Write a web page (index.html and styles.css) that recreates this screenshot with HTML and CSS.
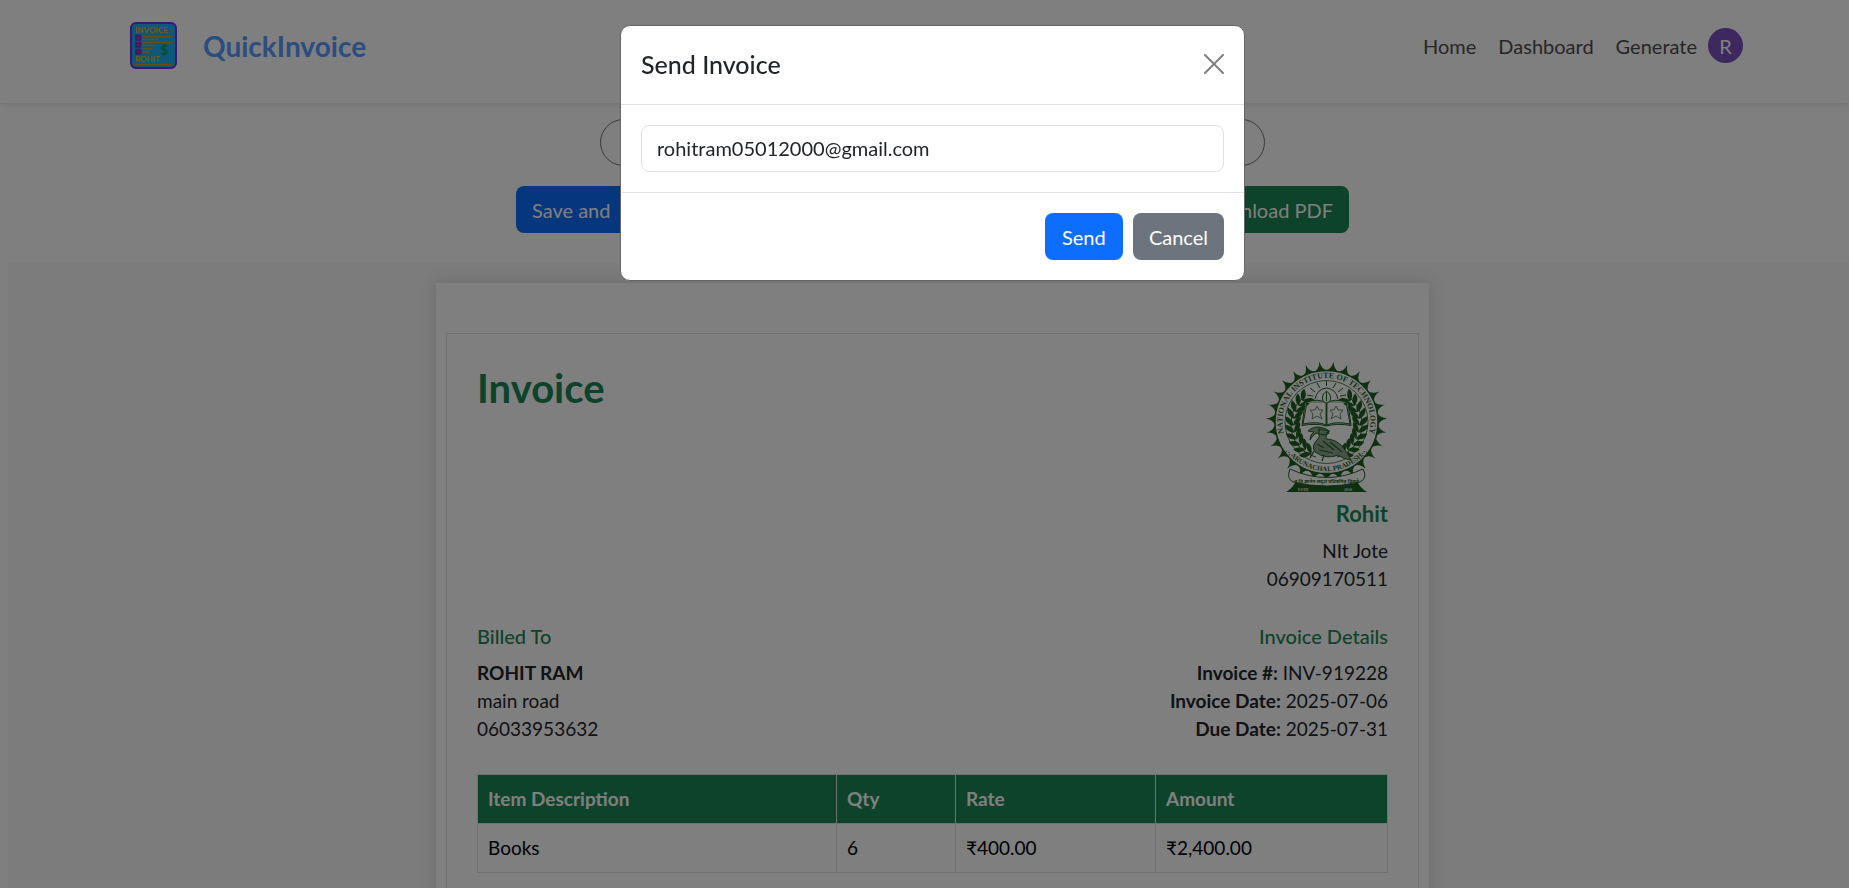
FILE: index.html
```html
<!DOCTYPE html>
<html lang="en">
<head>
<meta charset="utf-8">
<title>QuickInvoice</title>
<link rel="stylesheet" href="styles.css">
</head>
<body>
<div class="page">
  <header class="navbar">
    <a class="brand" href="#">
      <svg class="brand-logo" viewBox="0 0 47 47" aria-hidden="true">
        <rect x="1" y="1" width="45" height="45" rx="5" fill="#1ab0f0" stroke="#7a2bea" stroke-width="2"/>
        <text x="5" y="11" class="logo-text">INVOICE</text>
        <g fill="#e0305a" stroke="#7a2bea" stroke-width="1.500"><rect x="6" y="13.500" width="4.500" height="4.500"/><rect x="6" y="20.500" width="4.500" height="4.500"/><rect x="6" y="27.500" width="4.500" height="4.500"/></g>
        <path d="M13 14.500H41M13 17.500H28M13 20.500H41M13 23.500H26M13 27H22M13 30H19M5 42.500H41" stroke="#d49a20" stroke-width="1.300" stroke-linecap="round"/>
        <text x="30.500" y="33" class="logo-dollar">$</text>
        <text x="5" y="40" class="logo-text">ROHIT</text>
      </svg>
      <span class="brand-name">QuickInvoice</span>
    </a>
    <nav class="nav">
      <a href="#">Home</a>
      <a href="#">Dashboard</a>
      <a href="#">Generate</a>
      <button class="avatar" type="button" aria-label="Open user menu">R</button>
    </nav>
  </header>
  <main>
    <div class="templates">
      <button type="button">Template1</button>
      <button type="button">Template2</button>
      <button type="button">Template3</button>
      <button type="button">Template4</button>
      <button type="button">Template5</button>
    </div>
    <div class="actions">
      <button class="btn primary split" type="button"><span>Save and</span><span>Exit</span></button>
      <button class="btn danger" type="button">Delete Invoice</button>
      <button class="btn info" type="button">Send Email</button>
      <button class="btn success" type="button">Download PDF</button>
    </div>
    <section class="preview">
      <div class="paper">
        <article class="invoice">
          <div class="row top">
            <h1>Invoice</h1>
            <div class="company">
              <svg class="seal" viewBox="0 0 122 128" role="img" aria-label="National Institute of Technology Arunachal Pradesh">
                <defs>
                  <path id="tooth" d="M53.500 7Q59.500 5 60.500-3Q61.500 5 67.500 7L67.500 9H53.500Z"/>
                  <g id="teeth3"><use href="#tooth" transform="rotate(6.667 60.500 58)"/><use href="#tooth" transform="rotate(20 60.500 58)"/><use href="#tooth" transform="rotate(33.333 60.500 58)"/></g>
                  <g id="teeth9"><use href="#teeth3"/><use href="#teeth3" transform="rotate(40 60.500 58)"/><use href="#teeth3" transform="rotate(80 60.500 58)"/></g>
                  <g id="leaves"><path d="M27 60C21 58 19 54 20 50C25 52 28 55 27 60ZM27 60C28 55 31 51 35 51C36 55 32 59 27 60Z"/></g>
                  <g id="laurel">
                    <path d="M50 93A34 34 0 0 1 37 34" fill="none" stroke="#1f5f22"/>
                    <use href="#leaves" transform="rotate(-63 60.500 60)"/><use href="#leaves" transform="rotate(-51 60.500 60)"/><use href="#leaves" transform="rotate(-39 60.500 60)"/><use href="#leaves" transform="rotate(-27 60.500 60)"/><use href="#leaves" transform="rotate(-15 60.500 60)"/><use href="#leaves" transform="rotate(-3 60.500 60)"/><use href="#leaves" transform="rotate(9 60.500 60)"/><use href="#leaves" transform="rotate(21 60.500 60)"/><use href="#leaves" transform="rotate(33 60.500 60)"/><use href="#leaves" transform="rotate(44 60.500 60)"/>
                  </g>
                  <path id="arc-top" d="M22.400 80A44 44 0 1 1 98.600 80"/>
                  <path id="arc-bottom" d="M22 89A50 50 0 0 0 99 89"/>
                </defs>
                <g fill="#1f5f22">
                  <use href="#teeth9"/><use href="#teeth9" transform="rotate(120 60.500 58)"/><use href="#teeth9" transform="rotate(240 60.500 58)"/>
                  <circle cx="60.500" cy="58" r="51.500" fill="#fff" stroke="#1f5f22" stroke-width="1.500"/>
                  <circle cx="60.500" cy="58" r="41.500" fill="none" stroke="#1f5f22" stroke-width=".8"/>
                  <text class="seal-name"><textPath href="#arc-top" startOffset="50%">NATIONAL INSTITUTE OF TECHNOLOGY</textPath></text>
                  <text class="seal-state"><textPath href="#arc-bottom" startOffset="50%">ARUNACHAL PRADESH</textPath></text>
                  <use href="#laurel"/><use href="#laurel" transform="translate(121 0) scale(-1 1)"/>
                  <g fill="none" stroke="#1f5f22" stroke-width="1">
                    <circle cx="21" cy="90" r="2.500" stroke-dasharray="1.500 1"/><circle cx="99" cy="90" r="2.500" stroke-dasharray="1.500 1"/>
                    <path d="M49 35Q51 25 60.500 24Q70 25 72 35M60.500 28V37M57 37Q55 31 60.500 27Q66 31 64 37M60.500 22V17M54 24 51 19M67 24 70 19M49 28 44 24M72 28 77 24M47 32 41 31M74 32 80 31"/>
                    <path d="M41 38Q52 34 60.500 39Q69 34 80 38L84 60Q70 57 60.500 61Q51 57 37 60ZM39 39 36 61.500Q50 59 60.500 62Q71 59 85 61.500L82 39" fill="#c9d3c9"/>
                    <path d="M60.500 39V61" stroke-width="1.800"/>
                    <path d="M51 42 53 46 57 46 54 50 56 55 51 52 46 55 47 50 44 46 49 46ZM70 42 68 46 64 46 67 50 65 55 70 52 75 55 74 50 77 46 72 46Z" stroke-width=".7" fill="#fff"/>
                  </g>
                  <path d="M42 67Q48 61 57 64Q63 65 63 69Q59 71 60 75Q69 75 76 82Q81 88 85 96Q77 95 72 91Q61 96 49 88Q45 82 51 76Q55 72 52 69Q48 69 44 76Q44 70 48 68Z" fill="#8fa58f" stroke="#1f5f22"/>
                  <path d="M53 65 63 67 59 71 53 70ZM48 87 44 94M58 91 56 97M51 80 58 84M57 77 68 86M64 78 76 88M53 86 67 89" stroke="#1f5f22" stroke-width="1.200" fill="none"/>
                  <path d="M30 117H91Q94 124 101 128H20Q27 124 30 117Z"/>
                  <path d="M24 105Q60.500 122 97 105Q102 114 94 118Q60.500 126 27 118Q20 114 24 105Z" fill="#fff" stroke="#1f5f22"/>
                  <text x="60.500" y="119" class="seal-motto">न हि ज्ञानेन सदृशं पवित्रमिह विद्यते</text>
                  <text x="32" y="127" class="seal-year">ESTD</text><text x="78" y="127" class="seal-year">2010</text>
                </g>
              </svg>
              <h2>Rohit</h2>
              <p>NIt Jote</p>
              <p>06909170511</p>
            </div>
          </div>
          <div class="row parties">
            <div>
              <h3>Billed To</h3>
              <p><strong>ROHIT RAM</strong></p>
              <p>main road</p>
              <p>06033953632</p>
            </div>
            <div class="details">
              <h3>Invoice Details</h3>
              <p><strong>Invoice #:</strong> INV-919228</p>
              <p><strong>Invoice Date:</strong> 2025-07-06</p>
              <p><strong>Due Date:</strong> 2025-07-31</p>
            </div>
          </div>
          <table class="items">
            <thead><tr><th class="c-item">Item Description</th><th class="c-qty">Qty</th><th class="c-rate">Rate</th><th>Amount</th></tr></thead>
            <tbody><tr><td>Books</td><td>6</td><td>₹400.00</td><td>₹2,400.00</td></tr></tbody>
          </table>
        </article>
      </div>
    </section>
  </main>
</div>
<div class="backdrop">
  <div class="modal" role="dialog" aria-modal="true" aria-labelledby="modal-title">
    <div class="modal-header">
      <h2 id="modal-title">Send Invoice</h2>
      <button class="close" type="button" aria-label="Close">
        <svg viewBox="0 0 20 20" aria-hidden="true"><path d="M1 1 19 19M19 1 1 19"/></svg>
      </button>
    </div>
    <div class="modal-body"><input type="email" aria-label="Customer email" value="rohitram05012000@gmail.com"></div>
    <div class="modal-footer">
      <button class="btn primary" type="button">Send</button>
      <button class="btn secondary" type="button">Cancel</button>
    </div>
  </div>
</div>
</body>
</html>
```
FILE: styles.css
```css
* { box-sizing: border-box; }
html, body { height: 100%; }
body { margin: 0; overflow: hidden; font: 20px/28px Lato, "Open Sans", sans-serif; color: #212529; background: #fff; }
h1, h2, h3, p { margin: 0; }
button, input { font: inherit; }
a { color: inherit; text-decoration: none; }
.page { height: 100%; overflow: hidden; }
.navbar { display: flex; justify-content: space-between; align-items: center; padding: 22px 106px 34px 130px; box-shadow: 0 2px 5px rgba(0, 0, 0, .1); }
.brand { display: flex; align-items: center; gap: 26px; }
.brand-logo { width: 47px; height: 47px; }
.logo-text { font: 700 8px Lato, sans-serif; fill: #e8b020; }
.logo-dollar { font: 700 13px Lato, sans-serif; fill: #0c9a50; }
.brand-name { font-size: 28px; font-weight: 700; color: #569aff; }
.nav { display: flex; align-items: center; gap: 22px; color: #4d4d4d; }
.avatar { width: 35px; height: 35px; margin-left: -11px; padding: 0; border: 0; border-radius: 50%; background: #7b52bf; color: #fff; }
main { padding-left: 16px; }
.templates, .actions { display: flex; justify-content: space-between; margin: 16px auto 0; }
.templates { max-width: 665px; }
.templates button { height: 47px; padding: 0 18px 0 20px; border: 1px solid #6c757d; border-radius: 24px; background: none; color: #6c757d; font-size: 18px; }
.actions { max-width: 833px; margin-top: 20px; }
.btn { min-width: 78px; height: 47px; padding: 0 16px; border: 0; border-radius: 8px; color: #fff; }
.split { display: flex; align-items: center; gap: 10px; }
.primary { background: #0d6efd; }
.secondary { background: #6c757d; }
.danger { background: #dc3545; }
.info { background: #0dcaf0; }
.success { background: #198754; }
.preview { margin: 30px -8px 0; padding: 20px 0; background: #f8f8f8; }
.paper { max-width: 993px; margin: 0 auto; padding: 50px 10px; background: #fff; box-shadow: 0 0 15px rgba(0, 40, 20, .15); }
.invoice { padding: 30px; border: 1px solid #dee2e6; font-size: 19px; }
.row { display: flex; justify-content: space-between; }
.company, .details { text-align: right; }
.invoice h1, .invoice h2, .invoice h3 { color: #198754; }
.invoice h1 { font-size: 40px; line-height: 48px; }
.seal { display: block; width: 122px; height: 128px; margin-left: auto; overflow: visible; }
.seal-name { font: 700 8px "Liberation Serif", serif; text-anchor: middle; }
.seal-state { font: 700 7px "Liberation Serif", serif; text-anchor: middle; }
.seal-motto { font: 700 5px "Noto Sans Devanagari", "Noto Sans", sans-serif; text-anchor: middle; }
.seal-year { font: 700 4px "Liberation Serif", serif; fill: #dfe8df; }
.company h2 { margin: 8px 0 9px; font-size: 22px; }
.parties { margin: 29px 0 31px; }
.invoice h3 { margin-bottom: 9px; font-size: 20px; font-weight: 500; }
.items { width: 100%; table-layout: fixed; border-collapse: collapse; color: #000; }
.items th, .items td { height: 49px; padding: 10px; border: 1px solid #dee2e6; text-align: left; }
.items th { background: #198754; color: #fff; }
.c-item { width: 359px; }
.c-qty { width: 119px; }
.c-rate { width: 200px; }
.backdrop { position: fixed; inset: 0; padding: 25px 0 0 16px; background: rgba(0, 0, 0, .5); }
.modal { max-width: 625px; margin: 0 auto; border: 1px solid #666; border-radius: 10px; background: #fff; }
.modal-header { display: flex; justify-content: space-between; align-items: center; padding: 24px 20px 26px; border-bottom: 1px solid #dee2e6; }
.modal-header h2 { font-size: 25px; line-height: 28px; font-weight: 500; }
.close { width: 20px; height: 20px; padding: 0; border: 0; background: none; }
.close svg { display: block; fill: none; stroke: #808080; stroke-width: 2; stroke-linecap: round; }
.modal-body { padding: 20px; }
.modal-body input { display: block; width: 100%; height: 47px; padding: 0 15px 2px; border: 1px solid #dee2e6; border-radius: 8px; color: #212529; background: #fff; }
.modal-footer { display: flex; justify-content: flex-end; gap: 10px; padding: 20px; border-top: 1px solid #dee2e6; }
```
